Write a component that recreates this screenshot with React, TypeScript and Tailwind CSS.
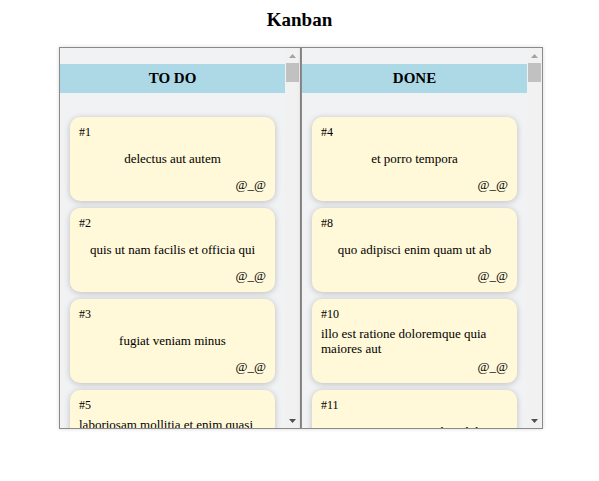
const columns = [
  {
    title: "TO DO",
    cards: [
      { id: 1, text: "delectus aut autem" },
      { id: 2, text: "quis ut nam facilis et officia qui" },
      { id: 3, text: "fugiat veniam minus" },
      { id: 5, text: "laboriosam mollitia et enim quasi adipisci quia provident illum" },
      { id: 6, text: "qui ullam ratione quibusdam voluptatem quia omnis" },
    ],
  },
  {
    title: "DONE",
    cards: [
      { id: 4, text: "et porro tempora" },
      { id: 8, text: "quo adipisci enim quam ut ab" },
      { id: 10, text: "illo est ratione doloremque quia maiores aut" },
      { id: 11, text: "vero rerum temporibus dolor" },
      { id: 12, text: "ipsa repellendus fugit nisi" },
    ],
  },
];

function Card({ id, text }: { id: number; text: string }) {
  return (
    <div className="mx-[10px] flex h-[84px] shrink-0 flex-col rounded-[10px] bg-[#fff8d9] px-[9px] pb-2 pt-2 shadow-[0_1px_6px_rgba(0,0,0,0.22)]">
      <div className="text-[12px] leading-[15px]">#{id}</div>
      <div className="flex flex-1 items-center justify-center text-[13px] leading-[15px]">{text}</div>
      <div className="text-right text-[13px] leading-[16px]">@_@</div>
    </div>
  );
}

// drawn scrollbar, the headless browser hides the real one
function Scrollbar() {
  return (
    <div className="flex w-[15px] shrink-0 flex-col bg-[#f1f1f1]">
      <div className="flex h-[15px] items-center justify-center">
        <svg width="7" height="4" viewBox="0 0 7 4">
          <path d="M3.5 0L7 4H0z" fill="#a3a3a3" />
        </svg>
      </div>
      <div className="mx-[1px] h-[19px] bg-[#c1c1c1]" />
      <div className="flex-1" />
      <div className="flex h-[15px] items-center justify-center">
        <svg width="7" height="4" viewBox="0 0 7 4">
          <path d="M0 0H7L3.5 4z" fill="#505050" />
        </svg>
      </div>
    </div>
  );
}

function Column({ title, cards }: { title: string; cards: { id: number; text: string }[] }) {
  return (
    <div className="flex h-[382px] w-[242px] border border-[#8a8a8a] bg-[#f1f2f4] shadow-[0_0_4px_rgba(0,0,0,0.15)]">
      <div className="min-w-0 flex-1 overflow-hidden pt-4">
        <div className="flex h-[29px] items-center justify-center bg-[#add8e6] text-[15px] font-bold">{title}</div>
        <div className="flex flex-col gap-[7px] pb-4 pt-6">
          {cards.map((c) => (
            <Card key={c.id} id={c.id} text={c.text} />
          ))}
        </div>
      </div>
      <Scrollbar />
    </div>
  );
}

export default function App() {
  return (
    <div className="min-h-[481px] bg-white pt-[8px] font-['Liberation_Serif',serif] text-black">
      <h1 className="text-center text-[19px] font-bold leading-[24px]">Kanban</h1>
      <div className="mt-[15px] flex justify-center pl-[3px]">
        {columns.map((col) => (
          <Column key={col.title} title={col.title} cards={col.cards} />
        ))}
      </div>
    </div>
  );
}
